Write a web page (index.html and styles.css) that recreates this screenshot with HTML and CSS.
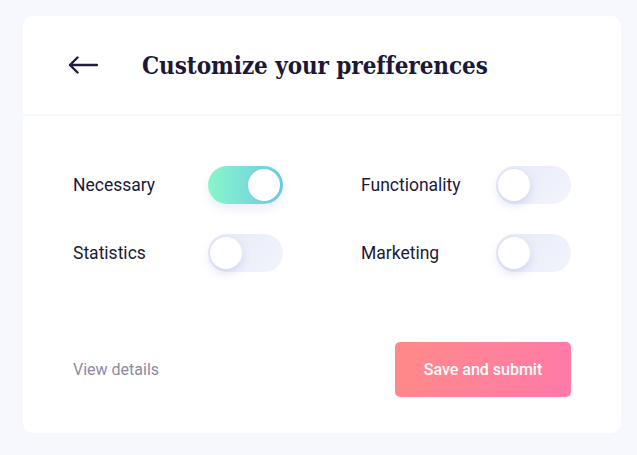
FILE: index.html
```html
<!DOCTYPE html>
<html>
<head>
<meta charset="utf-8">
<link rel="stylesheet" href="styles.css">
</head>
<body>
<div class="card">
  <div class="header">
    <svg class="back" width="30" height="18" viewBox="0 0 30 18"><path d="M29 9H2M9.5 1.5L2 9l7.5 7.5" fill="none" stroke="#1f1d3d" stroke-width="2.4" stroke-linecap="round" stroke-linejoin="round"/></svg>
    <h1 class="title">Customize your prefferences</h1>
  </div>
  <div class="body">
    <div class="grid">
      <div class="item"><span class="label">Necessary</span><span class="toggle on"><span class="knob"></span></span></div>
      <div class="item"><span class="label">Functionality</span><span class="toggle"><span class="knob"></span></span></div>
      <div class="item"><span class="label">Statistics</span><span class="toggle"><span class="knob"></span></span></div>
      <div class="item"><span class="label">Marketing</span><span class="toggle"><span class="knob"></span></span></div>
    </div>
    <div class="footer">
      <a class="details">View details</a>
      <button class="submit">Save and submit</button>
    </div>
  </div>
</div>
</body>
</html>
```
FILE: styles.css
```css
html, body { margin: 0; padding: 0; }
body {
  background: #f7f8fe;
  width: 637px;
  height: 455px;
  font-family: Roboto, "Liberation Sans", sans-serif;
  color: #1c1a3a;
}
.card {
  margin: 16px 0 0 23px;
  width: 598px;
  height: 417px;
  background: #fff;
  border-radius: 10px;
  box-sizing: border-box;
}
.header {
  height: 100px;
  display: flex;
  align-items: center;
  padding-left: 45px;
  border-bottom: 2px solid #f6f7fc;
  box-sizing: border-box;
}
.back { display: block; }
.title {
  margin: 0 0 0 44px;
  font-family: "DejaVu Serif", "Liberation Serif", serif;
  font-stretch: semi-condensed;
  font-weight: bold;
  font-size: 24px;
  color: #1b1838;
  letter-spacing: -0.08px;
}
.body {
  padding: 50px 50px 0 50px;
}
.grid {
  display: grid;
  grid-template-columns: 210px 210px;
  column-gap: 78px;
  row-gap: 30px;
}
.item {
  display: flex;
  align-items: center;
  justify-content: space-between;
  height: 38px;
}
.label { font-size: 17.5px; color: #1c1a3a; }
.toggle {
  position: relative;
  display: block;
  width: 75px;
  height: 38px;
  border-radius: 19px;
  background: linear-gradient(135deg, #e6e9f7, #f3f5fc);
}
.toggle .knob {
  position: absolute;
  left: 2px;
  top: 3px;
  width: 32px;
  height: 32px;
  border-radius: 50%;
  background: #fff;
  box-shadow: 0 4px 10px rgba(130, 145, 215, 0.28);
}
.toggle.on {
  background: linear-gradient(90deg, #88f6c9, #6ec8e6);
  box-shadow: 0 5px 10px rgba(150, 170, 220, 0.2);
}
.toggle.on .knob {
  left: auto;
  right: 3px;
  box-shadow: 0 0 0 1px rgba(110, 200, 230, 0.4);
}
.footer {
  display: flex;
  justify-content: space-between;
  align-items: center;
  margin-top: 70px;
}
.details { font-size: 16px; color: #8b8aa3; }
.submit {
  width: 176px;
  height: 55px;
  border: 0;
  border-radius: 5px;
  background: linear-gradient(100deg, #ff8a88, #ff7aa9);
  color: #fff;
  font-family: Roboto, "Liberation Sans", sans-serif;
  font-size: 16px;
  font-weight: 500;
}
```
